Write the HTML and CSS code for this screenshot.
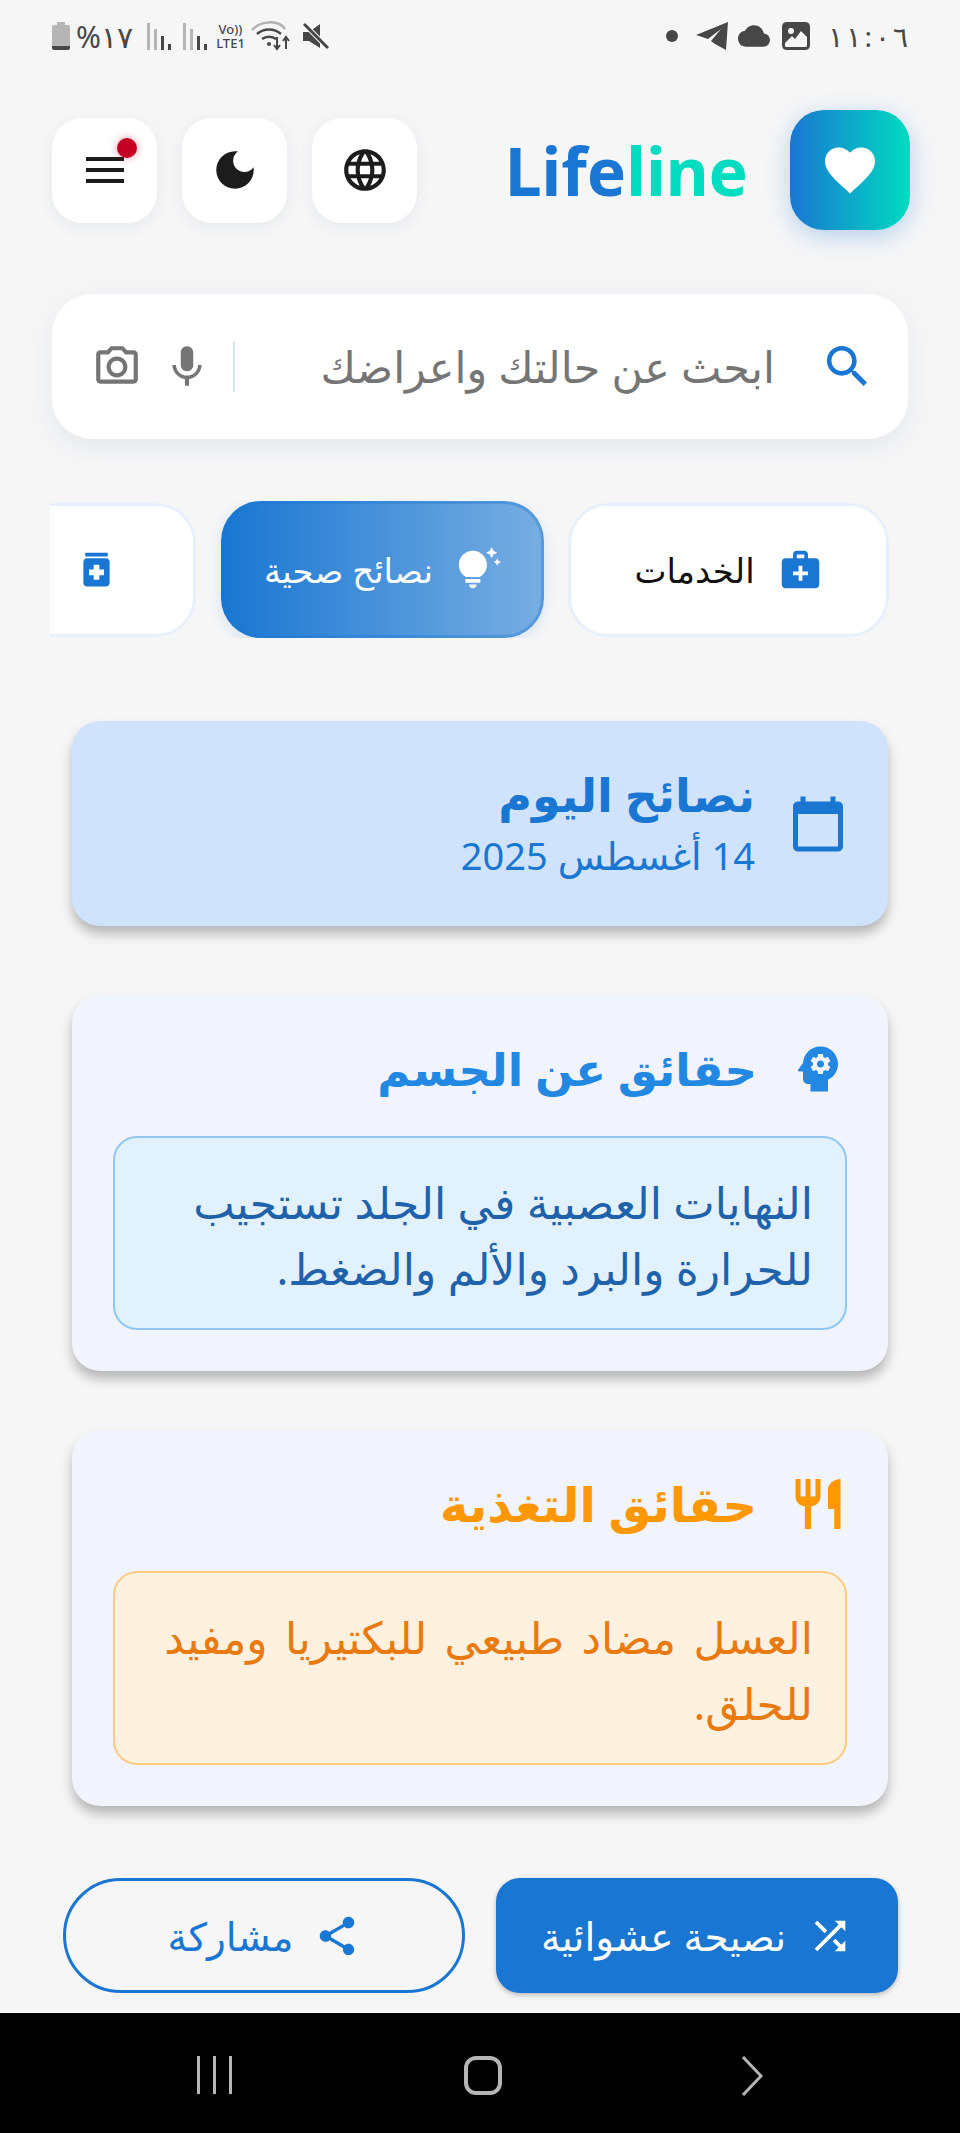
FILE: index.html
```html
<!DOCTYPE html>
<html lang="ar" dir="rtl">
<head>
    <meta charset="UTF-8">
    <meta name="viewport" content="width=device-width, initial-scale=1.0">
    <title>Lifeline</title>
    <link rel="stylesheet" href="styles.css">
</head>
<body>
    <div class="status-bar">
        <div class="status-group">
            <span class="st-time"><span>١</span><span>١</span><span>:</span><span>٠</span><span>٦</span></span>
            <svg class="st-image" viewBox="0 0 28 28"><rect x="1.5" y="1.5" width="25" height="25" rx="3" fill="none" stroke="#474747" stroke-width="3"/><path fill="#474747" d="M3 3h22v12l-6-6-6 8-3-3-7 7z"/><circle cx="9" cy="9" r="3" fill="#f6f6f7"/></svg>
            <svg class="st-cloud" viewBox="0 0 24 24"><path fill="#474747" d="M19.35 10.04C18.67 6.59 15.64 4 12 4 9.11 4 6.6 5.64 5.35 8.04 2.34 8.36 0 10.91 0 14c0 3.31 2.69 6 6 6h13c2.76 0 5-2.24 5-5 0-2.64-2.05-4.78-4.65-4.96z"/></svg>
            <svg class="st-send" viewBox="0 0 32 28"><path fill="#474747" d="M32 0L30 28 19 22 15 19 25 7 12 17 0 13z"/></svg>
            <span class="st-dot"></span>
        </div>
        <div class="status-group">
            <svg class="st-mute" viewBox="0 0 26 26"><path fill="#474747" d="M0 9h6l11-8v24L6 18H0z"/><path d="M1 1l24 24" stroke="#f6f6f7" stroke-width="5"/><path d="M1 1l24 24" stroke="#474747" stroke-width="3"/></svg>
            <svg class="st-wifi" viewBox="0 0 40 30"><path d="M1 9C10-1 28-1 34 8" fill="none" stroke="#b0b0b0" stroke-width="2.5"/><path d="M6 13c7-6 17-6 24 0M11 18c4-3 10-3 14 0" fill="none" stroke="#474747" stroke-width="2.5"/><circle cx="18" cy="23" r="2" fill="#474747"/><path d="M26 16v11M23 24l3 4 3-4M35 28V16M32 20l3-4 3 4" fill="none" stroke="#474747" stroke-width="2"/></svg>
            <span class="st-volte"><span>Vo))</span><span>LTE1</span></span>
            <svg class="st-signal" viewBox="0 0 24 28"><path fill="#b5b5b5" d="M0 1h3v27H0zM7 7h3v21H7z"/><path fill="#474747" d="M14 14h3v14h-3zM21 22h3v6h-3z"/></svg>
            <svg class="st-signal" viewBox="0 0 24 28"><path fill="#b5b5b5" d="M0 1h3v27H0zM7 7h3v21H7z"/><path fill="#474747" d="M14 14h3v14h-3zM21 22h3v6h-3z"/></svg>
            <span class="st-batt-text">%١٧</span>
            <svg class="st-battery" viewBox="0 0 18 28"><path fill="#b5b5b5" d="M5 0h8v3h3a2 2 0 0 1 2 2v19H0V5a2 2 0 0 1 2-2h3z"/><path fill="#474747" d="M0 24h18v2a2 2 0 0 1-2 2H2a2 2 0 0 1-2-2z"/></svg>
        </div>
    </div>

    <header class="top-header">
        <div class="brand">
            <div class="brand-logo">
                <svg viewBox="0 0 24 24"><path fill="#fff" d="M12 21.35l-1.45-1.32C5.4 15.36 2 12.28 2 8.5 2 5.42 4.42 3 7.5 3c1.74 0 3.41.81 4.5 2.09C13.09 3.81 14.76 3 16.5 3 19.58 3 22 5.42 22 8.5c0 3.78-3.4 6.86-8.55 11.54L12 21.35z"/></svg>
            </div>
            <div class="brand-name" dir="ltr"><span class="blue">Life</span><span class="teal">line</span></div>
        </div>
        <div class="header-actions">
            <button class="round-btn">
                <svg viewBox="0 0 24 24"><path fill="#1c1c1c" d="M11.99 2C6.47 2 2 6.48 2 12s4.47 10 9.99 10C17.52 22 22 17.52 22 12S17.52 2 11.99 2zm6.93 6h-2.95c-.32-1.25-.78-2.45-1.38-3.56 1.84.63 3.37 1.91 4.33 3.56zM12 4.04c.83 1.2 1.48 2.53 1.91 3.96h-3.82c.43-1.43 1.08-2.76 1.91-3.96zM4.26 14C4.1 13.36 4 12.69 4 12s.1-1.36.26-2h3.38c-.08.66-.14 1.32-.14 2 0 .68.06 1.34.14 2H4.26zm.82 2h2.95c.32 1.25.78 2.45 1.38 3.56-1.84-.63-3.37-1.9-4.33-3.56zm2.95-8H5.08c.96-1.66 2.49-2.93 4.33-3.56C8.81 5.55 8.35 6.75 8.03 8zM12 19.96c-.83-1.2-1.48-2.53-1.91-3.96h3.82c-.43 1.43-1.08 2.76-1.91 3.96zM14.34 14H9.66c-.09-.66-.16-1.32-.16-2 0-.68.07-1.35.16-2h4.68c.09.65.16 1.32.16 2 0 .68-.07 1.34-.16 2zm.25 5.56c.6-1.11 1.06-2.31 1.38-3.56h2.95c-.96 1.65-2.49 2.93-4.33 3.56zM16.36 14c.08-.66.14-1.32.14-2 0-.68-.06-1.34-.14-2h3.38c.16.64.26 1.31.26 2s-.1 1.36-.26 2h-3.38z"/></svg>
            </button>
            <button class="round-btn">
                <svg viewBox="0 0 24 24"><path fill="#1c1c1c" d="M12 3c-4.97 0-9 4.03-9 9s4.03 9 9 9 9-4.03 9-9c0-.46-.04-.92-.1-1.36-.98 1.37-2.58 2.26-4.4 2.26-2.98 0-5.4-2.42-5.4-5.4 0-1.81.89-3.42 2.26-4.4-.44-.06-.9-.1-1.36-.1z"/></svg>
            </button>
            <button class="round-btn">
                <span class="menu-lines"><i></i><i></i><i></i></span>
                <span class="notify-dot"></span>
            </button>
        </div>
    </header>

    <div class="search-box">
        <svg class="search-icon" viewBox="0 0 24 24"><path fill="#1976d2" d="M15.5 14h-.79l-.28-.27C15.41 12.59 16 11.11 16 9.5 16 5.91 13.09 3 9.5 3S3 5.91 3 9.5 5.91 16 9.5 16c1.61 0 3.09-.59 4.23-1.57l.27.28v.79l5 4.99L20.49 19l-4.99-5zm-6 0C7.01 14 5 11.99 5 9.5S7.01 5 9.5 5 14 7.01 14 9.5 11.99 14 9.5 14z"/></svg>
        <div class="search-text">ابحث عن حالتك واعراضك</div>
        <div class="search-divider"></div>
        <svg class="search-tool" viewBox="0 0 24 24"><path fill="#757575" d="M12 14c1.66 0 2.99-1.34 2.99-3L15 5c0-1.66-1.34-3-3-3S9 3.34 9 5v6c0 1.66 1.34 3 3 3zm5.3-3c0 3-2.54 5.1-5.3 5.1S6.7 14 6.7 11H5c0 3.41 2.72 6.23 6 6.72V21h2v-3.28c3.28-.48 6-3.3 6-6.72h-1.7z"/></svg>
        <svg class="search-tool" viewBox="0 0 24 24"><path fill="#757575" d="M14.12 4l1.83 2H20v12H4V6h4.05l1.83-2h4.24M15 2H9L7.17 4H4c-1.1 0-2 .9-2 2v12c0 1.1.9 2 2 2h16c1.1 0 2-.9 2-2V6c0-1.1-.9-2-2-2h-3.17L15 2zm-3 7c1.65 0 3 1.35 3 3s-1.35 3-3 3-3-1.35-3-3 1.35-3 3-3m0-2c-2.76 0-5 2.24-5 5s2.24 5 5 5 5-2.24 5-5-2.24-5-5-5z"/></svg>
    </div>

    <nav class="tabs">
        <div class="tab">
            <svg viewBox="0 0 24 24"><path fill="#1976d2" d="M20 6h-4V4c0-1.1-.9-2-2-2h-4c-1.1 0-2 .9-2 2v2H4c-1.1 0-2 .9-2 2v12c0 1.1.9 2 2 2h16c1.1 0 2-.9 2-2V8c0-1.1-.9-2-2-2zM10 4h4v2h-4V4zm6 11h-3v3h-2v-3H8v-2h3v-3h2v3h3v2z"/></svg>
            <span>الخدمات</span>
        </div>
        <div class="tab active">
            <svg viewBox="0 0 24 24"><path fill="#fff" d="M7 20h4c0 1.1-.9 2-2 2s-2-.9-2-2zm-2-1h8v-2H5v2zm11.5-9.5c0 3.82-2.66 5.86-3.77 6.5H5.27C4.16 15.36 1.5 13.32 1.5 9.5 1.5 5.36 4.86 2 9 2s7.5 3.36 7.5 7.5zm4.87-2.13L20 8l1.37.63L22 10l.63-1.37L24 8l-1.37-.63L22 6l-.63 1.37zM19 6l.94-2.06L22 3l-2.06-.94L19 0l-.94 2.06L16 3l2.06.94L19 6z"/></svg>
            <span>نصائح صحية</span>
        </div>
        <div class="tab tab-last">
            <svg viewBox="0 0 24 24"><path fill="#1976d2" d="M6 3h12v2H6zm11 3H7c-1.1 0-2 .9-2 2v11c0 1.1.9 2 2 2h10c1.1 0 2-.9 2-2V8c0-1.1-.9-2-2-2zm-1 9h-2.5v2.5h-3V15H8v-3h2.5V9.5h3V12H16v3z"/></svg>
            <span>الأدوية</span>
        </div>
    </nav>

    <main class="cards">
        <section class="card date-card">
            <svg class="card-icon" viewBox="0 0 24 24"><path fill="#1976d2" d="M20 3h-1V1h-2v2H7V1H5v2H4c-1.1 0-2 .9-2 2v16c0 1.1.9 2 2 2h16c1.1 0 2-.9 2-2V5c0-1.1-.9-2-2-2zm0 18H4V8h16v13z"/></svg>
            <div class="date-text">
                <h1>نصائح اليوم</h1>
                <p>14 أغسطس 2025</p>
            </div>
        </section>

        <section class="card fact-card">
            <div class="fact-head body-head">
                <svg class="card-icon" viewBox="0 0 24 24"><path fill="#2388e2" d="M13 8.57c-.79 0-1.43.64-1.43 1.43s.64 1.43 1.43 1.43 1.43-.64 1.43-1.43-.64-1.43-1.43-1.43z"/><path fill="#2388e2" d="M13 3C9.25 3 6.2 5.94 6.02 9.64L4.1 12.2c-.25.33-.01.8.4.8H6v3c0 1.1.9 2 2 2h1v3h7v-4.68c2.36-1.12 4-3.53 4-6.32 0-3.87-3.13-7-7-7zm3 7c0 .13-.01.26-.02.39l.83.66c.08.06.1.16.05.25l-.8 1.39c-.05.09-.16.12-.24.09l-.99-.4c-.21.16-.43.29-.67.39L14 13.83c-.01.1-.1.17-.2.17h-1.6c-.1 0-.18-.07-.2-.17l-.15-1.06c-.25-.1-.47-.23-.68-.39l-.99.4c-.09.03-.2 0-.25-.09l-.8-1.39c-.05-.08-.03-.19.05-.25l.84-.66c-.01-.13-.02-.26-.02-.39 0-.13.02-.27.04-.39l-.85-.66c-.08-.06-.1-.16-.05-.26l.8-1.38c.05-.09.15-.12.24-.09l1 .4c.2-.15.43-.29.67-.39L12 6.17c.02-.1.1-.17.2-.17h1.6c.1 0 .18.07.2.17l.15 1.06c.24.1.46.23.67.39l1-.4c.09-.03.2 0 .24.09l.8 1.38c.05.09.03.2-.05.26l-.85.66c.03.12.04.25.04.39z"/></svg>
                <h2>حقائق عن الجسم</h2>
            </div>
            <p class="fact-box body-box">النهايات العصبية في الجلد تستجيب للحرارة والبرد والألم والضغط.</p>
        </section>

        <section class="card fact-card">
            <div class="fact-head food-head">
                <svg class="card-icon" viewBox="0 0 24 24"><path fill="#ff9800" d="M11 9H9V2H7v7H5V2H3v7c0 2.12 1.66 3.84 3.75 3.97V22h2.5v-9.03C11.34 12.84 13 11.12 13 9V2h-2v7zm5-3v8h2.5v8H21V2c-2.76 0-5 2.24-5 4z"/></svg>
                <h2>حقائق التغذية</h2>
            </div>
            <p class="fact-box food-box">العسل مضاد طبيعي للبكتيريا ومفيد للحلق.</p>
        </section>
    </main>

    <div class="bottom-actions">
        <button class="action-btn primary">
            <svg viewBox="0 0 24 24"><path fill="#fff" d="M10.59 9.17L5.41 4 4 5.41l5.17 5.17 1.42-1.41zM14.5 4l2.04 2.04L4 18.59 5.41 20 17.96 7.46 20 9.5V4h-5.5zm.33 9.41l-1.41 1.41 3.13 3.13L14.5 20H20v-5.5l-2.04 2.04-3.13-3.13z"/></svg>
            <span>نصيحة عشوائية</span>
        </button>
        <button class="action-btn outline">
            <svg viewBox="0 0 24 24"><path fill="#1976d2" d="M18 16.08c-.76 0-1.44.3-1.96.77L8.91 12.7c.05-.23.09-.46.09-.7s-.04-.47-.09-.7l7.05-4.11c.54.5 1.25.81 2.04.81 1.66 0 3-1.34 3-3s-1.34-3-3-3-3 1.34-3 3c0 .24.04.47.09.7L8.04 9.81C7.5 9.31 6.79 9 6 9c-1.66 0-3 1.34-3 3s1.34 3 3 3c.79 0 1.5-.31 2.04-.81l7.12 4.16c-.05.21-.08.43-.08.65 0 1.61 1.31 2.92 2.92 2.92 1.61 0 2.92-1.31 2.92-2.92s-1.31-2.92-2.92-2.92z"/></svg>
            <span>مشاركة</span>
        </button>
    </div>

    <div class="nav-bar">
        <svg class="nav-back" viewBox="0 0 22 40"><path d="M2 1l18 19L2 39" fill="none" stroke="#b5b5b5" stroke-width="3"/></svg>
        <span class="nav-home"></span>
        <span class="nav-recent"><i></i><i></i><i></i></span>
    </div>
</body>
</html>
```

FILE: styles.css
```css
* {
    box-sizing: border-box;
}
body {
    margin: 0;
    width: 960px;
    height: 2133px;
    overflow: hidden;
    display: flex;
    flex-direction: column;
    font-family: "Noto Sans", "DejaVu Sans", sans-serif;
    background-color: #f6f6f7;
}
button {
    border: none;
    padding: 0;
    font-family: inherit;
}
svg {
    display: block;
    flex-shrink: 0;
}

/* status bar */
.status-bar {
    height: 72px;
    padding: 22px 52px 0;
    display: flex;
    justify-content: space-between;
    align-items: flex-start;
}
.status-group {
    display: flex;
    align-items: center;
    height: 28px;
    color: #474747;
}
.st-time {
    display: flex;
    direction: ltr;
    gap: 3px;
    font-size: 28px;
    margin-left: 18px;
}
.st-image {
    width: 28px;
    height: 28px;
    margin-left: 12px;
}
.st-cloud {
    width: 32px;
    height: 32px;
    margin-left: 10px;
}
.st-send {
    width: 32px;
    height: 28px;
    margin-left: 18px;
}
.st-dot {
    width: 12px;
    height: 12px;
    border-radius: 50%;
    background-color: #474747;
}
.st-mute {
    width: 26px;
    height: 26px;
    margin-left: 12px;
}
.st-wifi {
    width: 40px;
    height: 30px;
    margin-left: 6px;
}
.st-volte {
    display: flex;
    flex-direction: column;
    align-items: center;
    font-size: 13px;
    line-height: 14px;
    font-weight: 500;
    margin-left: 9px;
    direction: ltr;
}
.st-signal {
    width: 24px;
    height: 28px;
    margin-left: 12px;
}
.st-batt-text {
    font-size: 30px;
    direction: ltr;
    unicode-bidi: bidi-override;
    margin-left: 6px;
    margin-right: 2px;
}
.st-battery {
    width: 18px;
    height: 28px;
}

/* header */
.top-header {
    margin-top: 38px;
    padding: 0 50px 0 52px;
    height: 120px;
    display: flex;
    justify-content: space-between;
    align-items: center;
}
.brand {
    display: flex;
    align-items: center;
    gap: 42px;
}
.brand-logo {
    width: 120px;
    height: 120px;
    border-radius: 34px;
    background: linear-gradient(to right, #1976d2, #00dcc0);
    box-shadow: 0 6px 24px rgba(25, 118, 210, 0.3);
    display: flex;
    align-items: center;
    justify-content: center;
}
.brand-logo svg {
    width: 60px;
    height: 60px;
}
.brand-name {
    font-size: 66px;
    font-weight: 700;
    line-height: 1;
}
.blue {
    color: #1976d2;
}
.teal {
    color: #00dcc0;
}
.header-actions {
    display: flex;
    gap: 25px;
}
.round-btn {
    position: relative;
    width: 105px;
    height: 105px;
    border-radius: 30px;
    background-color: #fff;
    box-shadow: 0 4px 16px rgba(30, 60, 100, 0.07);
    display: flex;
    align-items: center;
    justify-content: center;
}
.round-btn svg {
    width: 50px;
    height: 50px;
}
.menu-lines {
    display: flex;
    flex-direction: column;
    gap: 7px;
    width: 38px;
}
.menu-lines i {
    display: block;
    height: 4px;
    background-color: #1c1c1c;
}
.notify-dot {
    position: absolute;
    top: 20px;
    right: 20px;
    width: 20px;
    height: 20px;
    border-radius: 50%;
    background-color: #c40025;
    box-shadow: 0 0 8px rgba(196, 0, 37, 0.4);
}

/* search */
.search-box {
    margin: 64px 52px 0;
    height: 145px;
    border-radius: 40px;
    background-color: #fff;
    box-shadow: 0 8px 26px rgba(30, 60, 100, 0.08);
    display: flex;
    align-items: center;
    padding: 0 33px 0 40px;
}
.search-icon {
    width: 55px;
    height: 55px;
    margin-left: 45px;
}
.search-text {
    flex: 1;
    font-size: 43px;
    color: #757575;
    white-space: nowrap;
}
.search-divider {
    width: 2px;
    height: 50px;
    background-color: #d5e4f1;
    margin-left: 21px;
}
.search-tool {
    width: 50px;
    height: 50px;
    margin-left: 20px;
}
.search-tool:last-child {
    margin-left: 0;
}

/* tabs */
.tabs {
    margin: 62px 50px 0 50px;
    padding-right: 21px;
    height: 137px;
    display: flex;
    align-items: center;
    gap: 24px;
    overflow: hidden;
}
.tab {
    flex-shrink: 0;
    width: 321px;
    height: 134px;
    border-radius: 40px;
    background-color: #fff;
    border: 3px solid #e8f1fb;
    display: flex;
    align-items: center;
    justify-content: center;
    gap: 23px;
    font-size: 34px;
    color: #111;
    white-space: nowrap;
}
.tab svg {
    width: 45px;
    height: 45px;
}
.tab.active {
    width: 323px;
    height: 137px;
    margin-left: 1px;
    color: #fff;
    background: linear-gradient(to right, #1976d2, #78aee2) border-box;
    border-color: rgba(25, 118, 210, 0.35);
    box-shadow: 0 4px 14px rgba(25, 118, 210, 0.15);
}
.tab-last {
    width: 340px;
    justify-content: flex-start;
    padding-right: 74px;
}

/* cards */
.cards {
    flex: 1;
    padding: 83px 72px 0;
    display: flex;
    flex-direction: column;
    gap: 59px;
}
.card {
    border-radius: 28px;
    box-shadow: 0 8px 12px rgba(0, 0, 0, 0.26);
}
.card-icon {
    width: 60px;
    height: 60px;
}
.date-card {
    height: 205px;
    margin-bottom: 10px;
    background-color: #cfe3fd;
    display: flex;
    align-items: center;
    gap: 33px;
    padding: 0 40px;
    color: #1976d2;
}
.date-text h1 {
    margin: 0;
    font-size: 46px;
    line-height: 62px;
    font-weight: 700;
}
.date-text p {
    margin: 0;
    font-size: 38px;
    line-height: 60px;
}
.fact-card {
    height: 376px;
    background-color: #f2f4fd;
    padding: 0 41px;
    display: flex;
    flex-direction: column;
}
.fact-head {
    height: 141px;
    display: flex;
    align-items: center;
    gap: 31px;
    padding-top: 6px;
}
.fact-head h2 {
    margin: 0;
    font-size: 45px;
    font-weight: 700;
}
.body-head {
    color: #2388e2;
}
.food-head {
    color: #ff9800;
}
.food-head h2 {
    font-size: 48px;
}
.fact-head .card-icon {
    margin-right: -1px;
}
.fact-box {
    margin: 0;
    height: 194px;
    border-radius: 24px;
    border: 2px solid;
    padding: 31px 32px 0;
    font-size: 44px;
    line-height: 66px;
}
.body-box {
    background-color: #e2f1fe;
    border-color: #90c8f0;
    color: #1f62ac;
}
.food-box {
    background-color: #fff1df;
    border-color: #fbcb85;
    color: #e87a10;
    word-spacing: 6px;
}

/* bottom buttons */
.bottom-actions {
    padding: 0 62px;
    height: 135px;
    display: flex;
    gap: 31px;
}
.action-btn {
    width: 402px;
    height: 115px;
    display: flex;
    align-items: center;
    justify-content: center;
    gap: 21px;
    font-size: 39px;
}
.action-btn svg {
    width: 46px;
    height: 46px;
}
.primary {
    background-color: #1976d2;
    color: #fff;
    border-radius: 24px;
    box-shadow: 0 2px 5px rgba(0, 0, 0, 0.25);
}
.outline {
    background-color: transparent;
    color: #1976d2;
    border: 3px solid #1976d2;
    border-radius: 58px;
}

/* android nav */
.nav-bar {
    height: 120px;
    background-color: #000;
    display: flex;
    align-items: flex-start;
    padding-top: 43px;
}
.nav-back {
    width: 22px;
    height: 40px;
    margin-right: 197px;
}
.nav-home {
    width: 38px;
    height: 39px;
    border: 4px solid #b5b5b5;
    border-radius: 12px;
    margin-right: 239px;
}
.nav-recent {
    display: flex;
    gap: 13px;
    margin-right: 232px;
}
.nav-recent i {
    display: block;
    width: 3px;
    height: 38px;
    background-color: #b5b5b5;
}
```
